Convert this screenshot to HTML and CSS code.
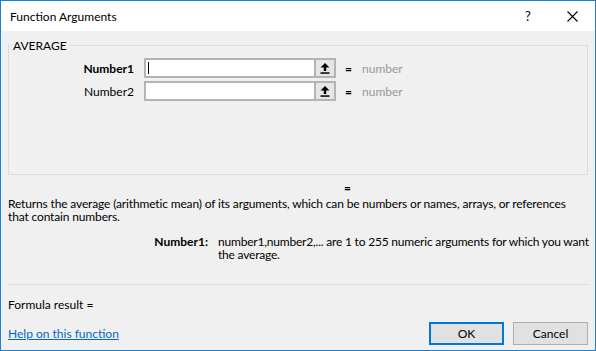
FILE: index.html
```html
<!DOCTYPE html>
<html lang="en">
<head>
    <meta charset="UTF-8">
    <meta name="viewport" content="width=device-width, initial-scale=1.0">
    <title>Function Arguments</title>
    <link rel="stylesheet" href="styles.css">
</head>
<body>
    <div class="dialog">
        <!-- Barra de titulo -->
        <div class="titlebar">
            <span class="title">Function Arguments</span>
            <span class="help-btn">?</span>
            <span class="close-btn">
                <svg width="11" height="11" viewBox="0 0 11 11">
                    <path d="M0.5 0.5 L10.5 10.5 M10.5 0.5 L0.5 10.5" stroke="#000" stroke-width="1.1" fill="none"/>
                </svg>
            </span>
        </div>

        <div class="content">
            <fieldset class="group">
                <legend>AVERAGE</legend>

                <div class="arg-row">
                    <label class="arg-label bold" for="n1">Number1</label>
                    <div class="ref-edit">
                        <input type="text" id="n1">
                        <span class="caret"></span>
                        <span class="collapse-btn">
                            <svg width="10" height="11" viewBox="0 0 10 11">
                                <path d="M5 0 L9.5 4.5 L6.2 4.5 L6.2 8 L3.8 8 L3.8 4.5 L0.5 4.5 Z" fill="#000"/>
                                <rect x="0.5" y="9.3" width="9" height="1.5" fill="#000"/>
                            </svg>
                        </span>
                    </div>
                    <span class="eq">=</span>
                    <span class="arg-value">number</span>
                </div>

                <div class="arg-row">
                    <label class="arg-label" for="n2">Number2</label>
                    <div class="ref-edit">
                        <input type="text" id="n2">
                        <span class="collapse-btn">
                            <svg width="10" height="11" viewBox="0 0 10 11">
                                <path d="M5 0 L9.5 4.5 L6.2 4.5 L6.2 8 L3.8 8 L3.8 4.5 L0.5 4.5 Z" fill="#000"/>
                                <rect x="0.5" y="9.3" width="9" height="1.5" fill="#000"/>
                            </svg>
                        </span>
                    </div>
                    <span class="eq">=</span>
                    <span class="arg-value">number</span>
                </div>
            </fieldset>

            <div class="result-eq">=</div>

            <p class="description">Returns the average (arithmetic mean) of its arguments, which can be numbers or names, arrays, or references that contain numbers.</p>

            <div class="arg-help">
                <span class="arg-help-name">Number1:</span>
                <span class="arg-help-text">number1,number2,... are 1 to 255 numeric arguments for which you want the average.</span>
            </div>

            <div class="separator"></div>

            <div class="formula-result">Formula result =</div>

            <div class="footer">
                <a href="#" class="help-link">Help on this function</a>
                <div class="buttons">
                    <button class="btn btn-default">OK</button>
                    <button class="btn">Cancel</button>
                </div>
            </div>
        </div>
    </div>
</body>
</html>
```

FILE: styles.css
```css
body {
    margin: 0;
    padding: 0;
    font-family: Lato, "Liberation Sans", sans-serif;
    font-size: 12px;
    color: #000;
    background-color: #f0f0f0;
}
.dialog {
    width: 596px;
    height: 351px;
    box-sizing: border-box;
    border: 1px solid #1883d7;
    background-color: #f0f0f0;
    display: flex;
    flex-direction: column;
}
.titlebar {
    height: 30px;
    background-color: #fff;
    display: flex;
    align-items: center;
    padding-left: 9px;
    flex-shrink: 0;
}
.title {
    font-size: 12px;
    flex: 1;
}
.help-btn {
    width: 14px;
    text-align: center;
    margin-right: 32px;
    font-size: 13px;
}
.close-btn {
    display: flex;
    align-items: center;
    margin-right: 17px;
}
.content {
    padding: 0 7px;
    flex: 1;
    display: flex;
    flex-direction: column;
}
.group {
    margin: 8px 0 0 0;
    padding: 6px 0 0 0;
    border: 1px solid #dcdcdc;
    height: 136px;
    box-sizing: border-box;
}
.group legend {
    padding: 0 2px;
    margin-left: 2px;
    line-height: 13px;
}
.arg-row {
    display: flex;
    align-items: center;
    height: 20px;
    margin-bottom: 3px;
}
.arg-label {
    width: 125px;
    text-align: right;
    margin-right: 10px;
}
.bold {
    font-weight: bold;
}
.ref-edit {
    display: flex;
    position: relative;
    height: 20px;
}
.ref-edit input {
    width: 170px;
    height: 20px;
    box-sizing: border-box;
    border: 2px solid #b4b4b4;
    border-right: none;
    background-color: #fff;
    padding: 0 3px;
    outline: none;
}
.caret {
    position: absolute;
    left: 4px;
    top: 4px;
    width: 1px;
    height: 12px;
    background-color: #000;
}
.collapse-btn {
    width: 22px;
    height: 20px;
    box-sizing: border-box;
    border: 2px solid #b4b4b4;
    background-color: #e6e6e6;
    display: flex;
    align-items: center;
    justify-content: center;
}
.eq {
    margin-left: 9px;
    width: 17px;
    font-weight: bold;
}
.arg-value {
    color: #999;
}
.result-eq {
    margin-top: 6px;
    padding-left: 336px;
    line-height: 13px;
    font-weight: bold;
}
.description {
    margin: 3px 0 0 0;
    line-height: 13px;
    letter-spacing: -0.15px;
}
.arg-help {
    display: flex;
    margin-top: 12px;
    line-height: 13px;
}
.arg-help-name {
    width: 200px;
    text-align: right;
    font-weight: bold;
    margin-right: 10px;
    flex-shrink: 0;
}
.arg-help-text {
    letter-spacing: -0.2px;
    margin-right: -3px;
}
.separator {
    border-top: 1px solid #dcdcdc;
    margin-top: 23px;
}
.formula-result {
    margin-top: 13px;
    line-height: 13px;
}
.footer {
    display: flex;
    align-items: center;
    justify-content: space-between;
    margin-top: 11px;
}
.help-link {
    color: #0066cc;
    text-decoration: underline;
}
.buttons {
    display: flex;
    gap: 9px;
}
.btn {
    width: 75px;
    height: 23px;
    box-sizing: border-box;
    background-color: #e1e1e1;
    border: 1px solid #adadad;
    font-family: Lato, "Liberation Sans", sans-serif;
    font-size: 12px;
    padding: 0;
}
.btn-default {
    border: 2px solid #0078d7;
}
```
